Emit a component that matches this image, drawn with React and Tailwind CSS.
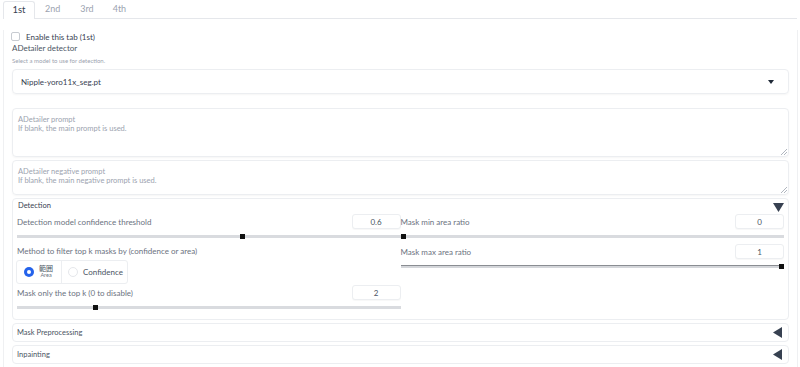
const font = { fontFamily: "Lato, 'Noto Sans CJK JP', sans-serif" }

function NumberBox({ value }) {
    return (
        <div className="w-[49px] h-[15px] rounded-[3px] border border-[#eceef1] shadow-[0_1px_1px_rgba(0,0,0,0.03)] bg-white flex items-center justify-center text-[8px] text-[#4b5563]">
            {value}
        </div>
    )
}

function Slider({ pos, filled }) {
    return (
        <div className="relative h-[7px] flex items-center">
            <div
                className={
                    filled
                        ? "w-full h-[3px] bg-[#d4d6da] border-t border-[#8a8d92]"
                        : "w-full h-[3px] bg-[#d9dbdf]"
                }
            />
            <div
                className="absolute w-[5px] h-[5px] bg-[#111111]"
                style={{ left: `calc(${pos}% - ${pos * 0.05}px)` }}
            />
        </div>
    )
}

function SliderField({ label, value, pos, filled, pad }) {
    return (
        <div className={pad}>
            <div className="flex items-center justify-between h-[15px]">
                <span className="text-[8px] text-[#6b7280]">{label}</span>
                <NumberBox value={value} />
            </div>
            <div className="mt-[4px]">
                <Slider pos={pos} filled={filled} />
            </div>
        </div>
    )
}

function Triangle({ dir }) {
    return dir === "down" ? (
        <svg width="11" height="9" viewBox="0 0 11 9">
            <polygon points="0,0 11,0 5.5,9" fill="#374151" />
        </svg>
    ) : (
        <svg width="9" height="11" viewBox="0 0 9 11">
            <polygon points="9,0 9,11 0,5.5" fill="#374151" />
        </svg>
    )
}

function Resize() {
    return (
        <svg width="6" height="6" viewBox="0 0 6 6" className="absolute right-[1px] bottom-[1px]">
            <line x1="0" y1="6" x2="6" y2="0" stroke="#9ca3af" strokeWidth="0.8" />
            <line x1="3" y1="6" x2="6" y2="3" stroke="#9ca3af" strokeWidth="0.8" />
        </svg>
    )
}

export default function App() {
    return (
        <div className="w-[800px] h-[367px] bg-white overflow-hidden" style={font}>
            {/* tabs */}
            <div className="flex h-[19px] pl-[3px]">
                <div className="w-[32px] h-[18px] mt-[1px] border border-b-0 border-[#e5e7eb] rounded-t-[3px] flex items-center justify-center text-[9.5px] text-[#374151] bg-white">
                    1st
                </div>
                <div className="flex items-center text-[9px] text-[#9ca3af] border-b border-[#e5e7eb] w-[762px]">
                    <span className="ml-[10px]">2nd</span>
                    <span className="ml-[20px]">3rd</span>
                    <span className="ml-[19px]">4th</span>
                </div>
            </div>

            <div className="ml-[3px] w-[795px] h-[348px] border-l border-r border-[#eff0f2] pl-[7px] pr-[8px]">
                <div className="flex items-center h-[13px] mt-[11px]">
                    <div className="w-[9px] h-[9px] border border-[#c7cbd1] rounded-[2px] bg-white" />
                    <span className="ml-[6px] text-[8px] text-[#374151]">Enable this tab (1st)</span>
                </div>
                <div className="text-[8px] text-[#4b5563] leading-[11px] ml-[1px]">ADetailer detector</div>
                <div className="text-[6px] text-[#9ca3af] leading-[10px] mt-[2px] ml-[1px]">
                    Select a model to use for detection.
                </div>

                {/* dropdown */}
                <div className="mt-[3px] ml-[1px] w-[777px] h-[25px] rounded-[4px] border border-[#eceef1] shadow-[0_1px_2px_rgba(0,0,0,0.04)] flex items-center justify-between pl-[8px] pr-[14px]">
                    <span className="text-[8px] text-[#374151]">Nipple-yoro11x_seg.pt</span>
                    <svg width="6" height="4" viewBox="0 0 6 4">
                        <polygon points="0,0 6,0 3,4" fill="#1f2937" />
                    </svg>
                </div>

                {/* prompts */}
                <div className="relative mt-[14px] ml-[1px] w-[777px] h-[49px] rounded-[4px] border border-[#eceef1] shadow-[0_1px_2px_rgba(0,0,0,0.04)] px-[5px] pt-[6px] text-[7.5px] leading-[9px] text-[#9ca3af]">
                    <div>ADetailer prompt</div>
                    <div>If blank, the main prompt is used.</div>
                    <Resize />
                </div>
                <div className="relative mt-[3px] ml-[1px] w-[777px] h-[35px] rounded-[4px] border border-[#eceef1] shadow-[0_1px_2px_rgba(0,0,0,0.04)] px-[5px] pt-[6px] text-[7.5px] leading-[9px] text-[#9ca3af]">
                    <div>ADetailer negative prompt</div>
                    <div>If blank, the main negative prompt is used.</div>
                    <Resize />
                </div>

                {/* detection */}
                <div className="mt-[3px] ml-[1px] w-[777px] h-[122px] rounded-[4px] border border-[#eceef1] px-[4px]">
                    <div className="flex items-center justify-between h-[13px]">
                        <span className="text-[7.5px] text-[#374151] ml-[1px]">Detection</span>
                        <span className="mt-[3px]">
                            <Triangle dir="down" />
                        </span>
                    </div>
                    <div className="grid grid-cols-2 mt-[2px]">
                        <div className="flex flex-col">
                            <SliderField label="Detection model confidence threshold" value="0.6" pos={59} />
                            <div className="text-[8px] text-[#6b7280] mt-[6px] h-[11px] leading-[11px]">
                                Method to filter top k masks by (confidence or area)
                            </div>
                            <div className="flex mt-[3px] w-[112px] h-[24px] rounded-[3px] border border-[#eceef1] overflow-hidden -ml-[1px]">
                                <div className="w-[45px] flex items-center pl-[7px] border-r border-[#eceef1]">
                                    <div className="w-[10px] h-[10px] rounded-full bg-[#2563eb] flex items-center justify-center">
                                        <div className="w-[4px] h-[4px] rounded-full bg-white" />
                                    </div>
                                    <div className="ml-[5px] flex flex-col items-center leading-none">
                                        <span className="text-[7px] text-[#4b5563]">範囲</span>
                                        <span className="text-[5.5px] text-[#6b7280] mt-[1px]">Area</span>
                                    </div>
                                </div>
                                <div className="flex-1 flex items-center pl-[6px]">
                                    <div className="w-[10px] h-[10px] rounded-full border border-[#e5e7eb]" />
                                    <span className="ml-[5px] text-[8px] text-[#4b5563]">Confidence</span>
                                </div>
                            </div>
                            <SliderField label="Mask only the top k (0 to disable)" value="2" pos={20} pad="mt-[1px]" />
                        </div>
                        <div className="flex flex-col">
                            <SliderField label="Mask min area ratio" value="0" pos={0} />
                            <SliderField label="Mask max area ratio" value="1" pos={100} filled pad="mt-[4px]" />
                        </div>
                    </div>
                </div>

                {/* collapsed accordions */}
                <div className="mt-[3px] ml-[1px] w-[777px] h-[19px] rounded-[4px] border border-[#eceef1] flex items-center justify-between pl-[4px] pr-[6px]">
                    <span className="text-[7.5px] text-[#4b5563]">Mask Preprocessing</span>
                    <Triangle dir="left" />
                </div>
                <div className="mt-[3px] ml-[1px] w-[777px] h-[19px] rounded-[4px] border border-[#eceef1] flex items-center justify-between pl-[4px] pr-[6px]">
                    <span className="text-[7.5px] text-[#4b5563]">Inpainting</span>
                    <Triangle dir="left" />
                </div>
            </div>
        </div>
    )
}
